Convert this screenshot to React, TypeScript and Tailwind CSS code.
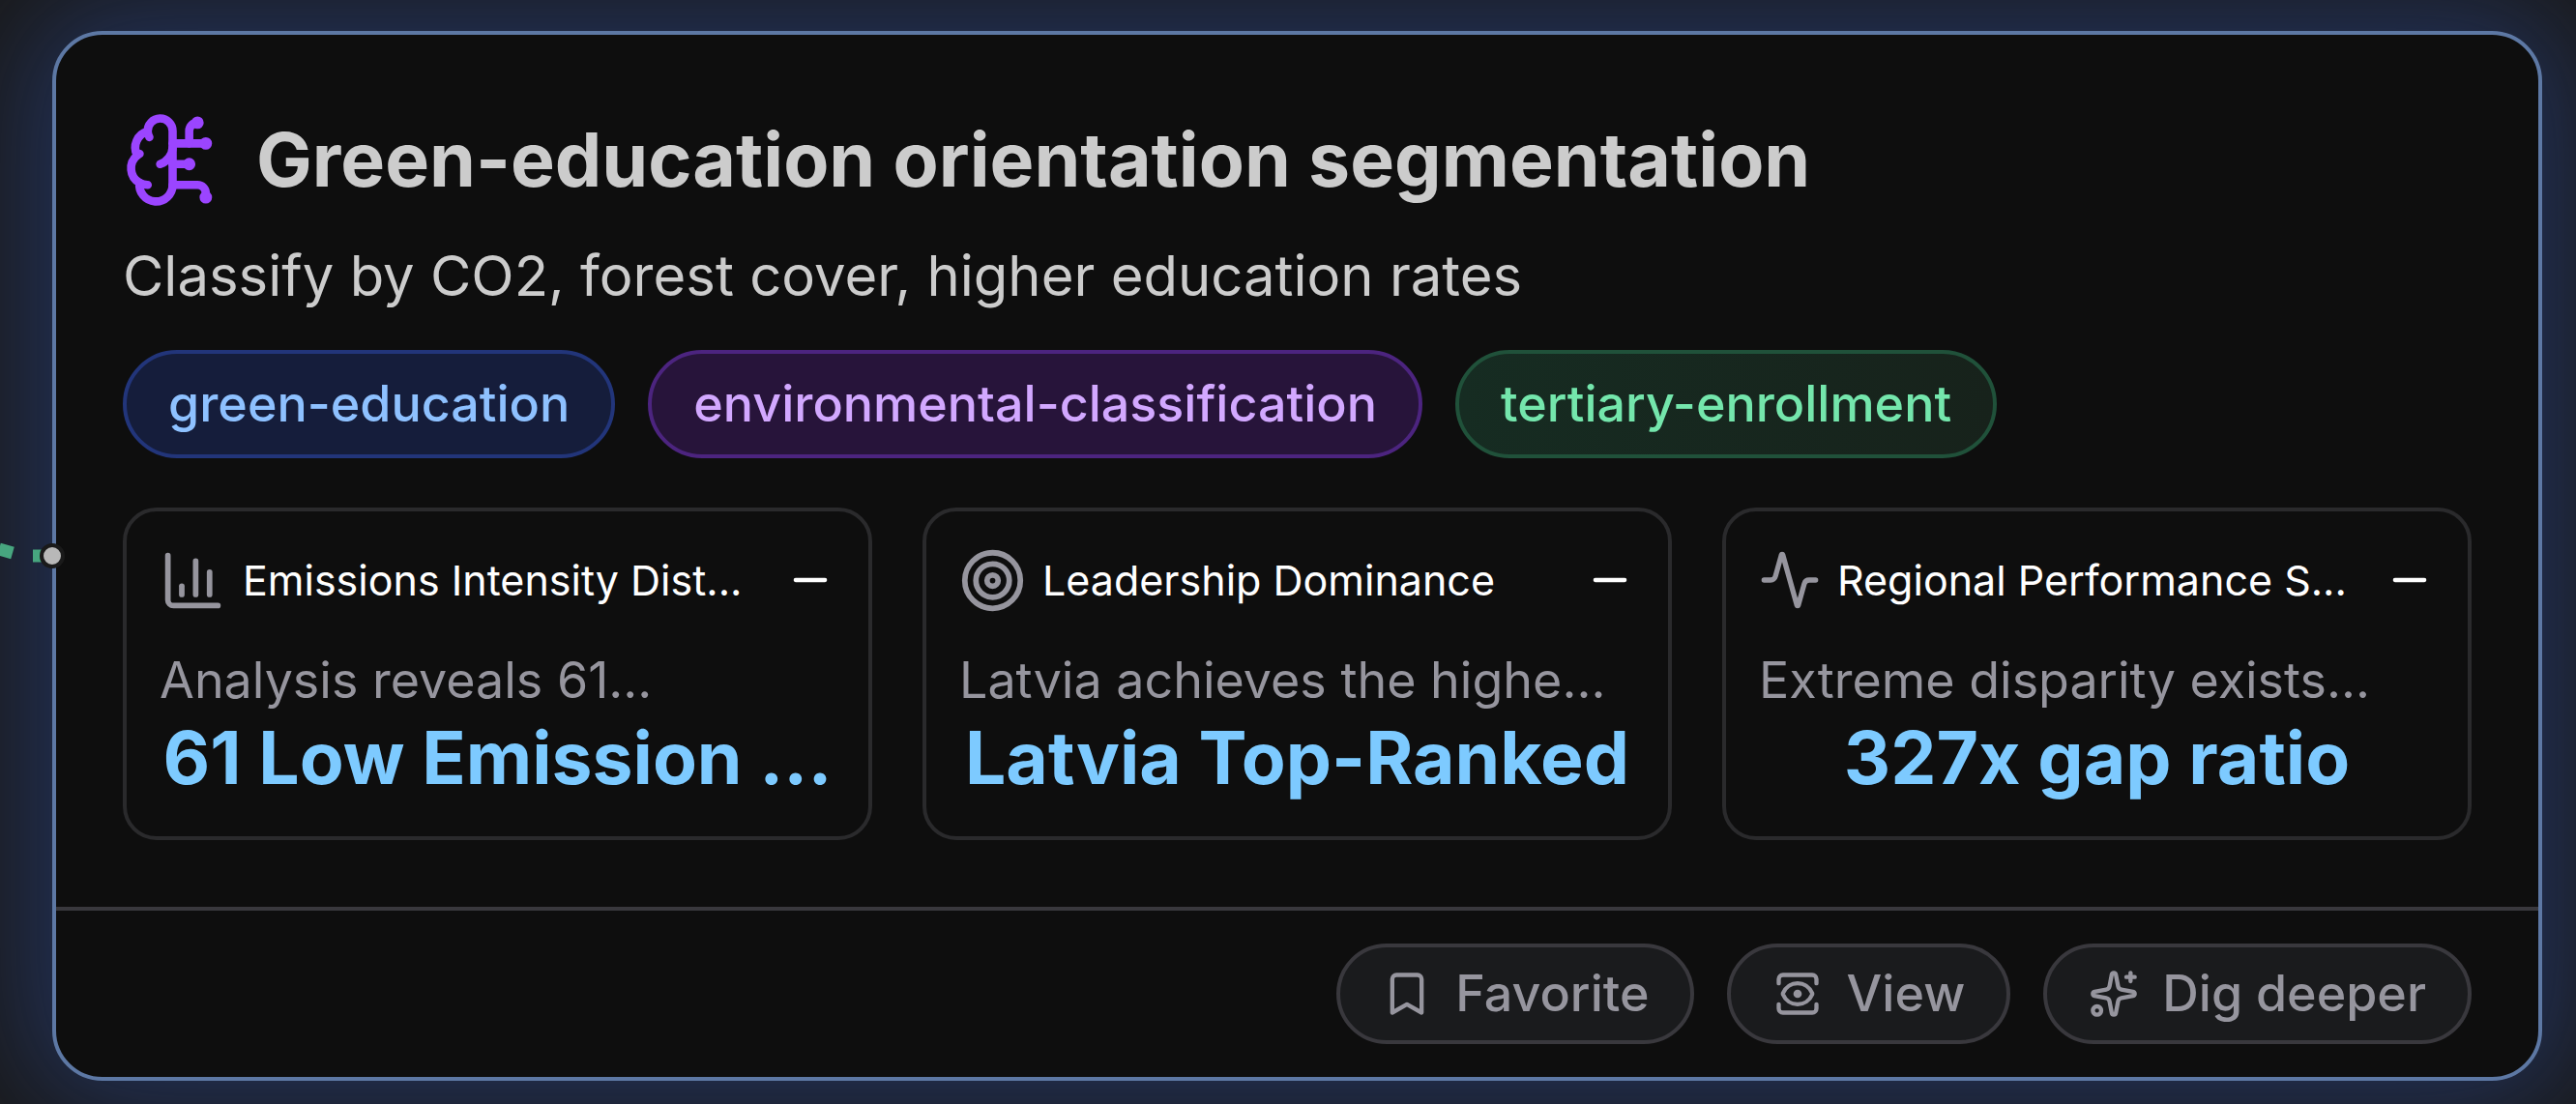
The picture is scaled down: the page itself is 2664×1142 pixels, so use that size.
import { Activity, Bookmark, BrainCircuit, ChartColumn, Minus, Target } from 'lucide-react';

const tags = [
  { label: 'green-education', style: 'border-[#22357a] bg-[#151d3b] text-[#8ec1ff]' },
  { label: 'environmental-classification', style: 'border-[#4c247f] bg-[#27143a] text-[#d2a8ff]' },
  { label: 'tertiary-enrollment', style: 'border-[#20513a] bg-linear-to-r from-[#162c22] to-[#17221b] text-[#74e6ac]' },
];

const metrics = [
  { icon: ChartColumn, iconStyle: 'size-[69px]', title: 'Emissions Intensity Dist...', text: 'Analysis reveals 61...', value: '61 Low Emission ...' },
  { icon: Target, iconStyle: 'size-[69px]', title: 'Leadership Dominance', text: 'Latvia achieves the highe...', value: 'Latvia Top-Ranked' },
  { icon: Activity, iconStyle: 'size-16', title: 'Regional Performance S...', text: 'Extreme disparity exists...', value: '327x gap ratio' },
];

const ViewIcon = ({ className }: { className?: string }) => (
  <svg className={className} viewBox="0 0 24 24" fill="none" stroke="currentColor" strokeWidth={2} strokeLinecap="round" strokeLinejoin="round">
    <path d="M21 17v2a2 2 0 0 1-2 2H5a2 2 0 0 1-2-2v-2" />
    <path d="M21 7V5a2 2 0 0 0-2-2H5a2 2 0 0 0-2 2v2" />
    <circle cx="12" cy="12" r="1" />
    <path d="M18.944 12.33a1 1 0 0 0 0-.66 7.5 7.5 0 0 0-13.888 0 1 1 0 0 0 0 .66 7.5 7.5 0 0 0 13.888 0" />
  </svg>
);

const SparklesIcon = ({ className }: { className?: string }) => (
  <svg className={className} viewBox="0 0 24 24" fill="none" stroke="currentColor" strokeWidth={2} strokeLinecap="round" strokeLinejoin="round">
    <path d="M11.017 2.814a1 1 0 0 1 1.966 0l1.051 5.558a2 2 0 0 0 1.594 1.594l5.558 1.051a1 1 0 0 1 0 1.966l-5.558 1.051a2 2 0 0 0-1.594 1.594l-1.051 5.558a1 1 0 0 1-1.966 0l-1.051-5.558a2 2 0 0 0-1.594-1.594l-5.558-1.051a1 1 0 0 1 0-1.966l5.558-1.051a2 2 0 0 0 1.594-1.594z" />
    <path d="M20 2v4" />
    <path d="M22 4h-4" />
    <circle cx="4" cy="20" r="2" />
  </svg>
);

const actions = [
  { icon: Bookmark, label: 'Favorite' },
  { icon: ViewIcon, label: 'View' },
  { icon: SparklesIcon, label: 'Dig deeper' },
];

// Incoming edge and the connection handle on the card's left side
const NodeHandle = () => (
  <svg className="absolute top-[510px] -left-[58px] h-16 w-20" viewBox="0 0 80 64" fill="none">
    <path d="M-1 22 L13 26" stroke="#47a67f" strokeWidth={13} />
    <path d="M34 29 H46" stroke="#47a67f" strokeWidth={13} />
    <circle cx="54" cy="29" r="11" fill="#b8b8b8" stroke="#1a1a1a" strokeWidth={4} />
  </svg>
);

const App = () => {
  return (
    <div className="min-h-screen overflow-hidden bg-[#1a1a1a] pt-8 pr-[35px] pb-6 pl-[54px] font-[Inter,sans-serif]">
      <article className="relative rounded-[52px] border-4 border-[#5d78a4] bg-[#0e0e0e] shadow-[0_0_120px_28px_rgba(56,112,255,0.27)]">
        <NodeHandle />

        <div className="p-[69px]">
          <header className="flex items-center gap-[35px]">
            <BrainCircuit className="size-[103px] shrink-0 text-[#9b45ff]" />
            <h2 className="text-[77px] leading-[120px] font-bold text-[#cccccc]">Green-education orientation segmentation</h2>
          </header>
          <p className="mt-[17px] text-[58px] leading-[86px] text-[#cccccc]">Classify by CO2, forest cover, higher education rates</p>

          <ul className="mt-[34px] flex gap-[34px]">
            {tags.map((tag) => (
              <li key={tag.label} className={`flex h-28 items-center rounded-full border-4 px-[43px] text-[52px] font-medium ${tag.style}`}>
                {tag.label}
              </li>
            ))}
          </ul>

          <div className="mt-[51px] grid grid-cols-3 gap-[52px]">
            {metrics.map((metric) => (
              <section key={metric.title} className="min-w-0 rounded-[35px] border-4 border-[#2a2a2c] px-[34px] pt-[34px] pb-9">
                <div className="flex h-[74px] items-center gap-[17px]">
                  <metric.icon className={`shrink-0 text-[#96959e] ${metric.iconStyle}`} />
                  <h3 className="min-w-0 flex-1 text-[43px] whitespace-nowrap text-white">{metric.title}</h3>
                  <Minus className="size-[52px] shrink-0 text-white" />
                </div>
                <p className="mt-8 text-[52px] leading-[69px] whitespace-nowrap text-[#96959e]">{metric.text}</p>
                <p className="text-center text-[75px] leading-[91px] font-bold whitespace-nowrap text-[#7dcaff]">{metric.value}</p>
              </section>
            ))}
          </div>
        </div>

        <footer className="flex justify-end gap-[34px] border-t-4 border-[#39383d] px-[69px] py-[34px]">
          {actions.map((action) => (
            <button key={action.label} type="button" className="flex h-[104px] items-center gap-6 rounded-full border-4 border-[#39383d] bg-[#1a1b1d] px-[43px] text-[52px] font-medium text-[#96959e]">
              <action.icon className="size-[52px]" />
              {action.label}
            </button>
          ))}
        </footer>
      </article>
    </div>
  );
};

export default App;
